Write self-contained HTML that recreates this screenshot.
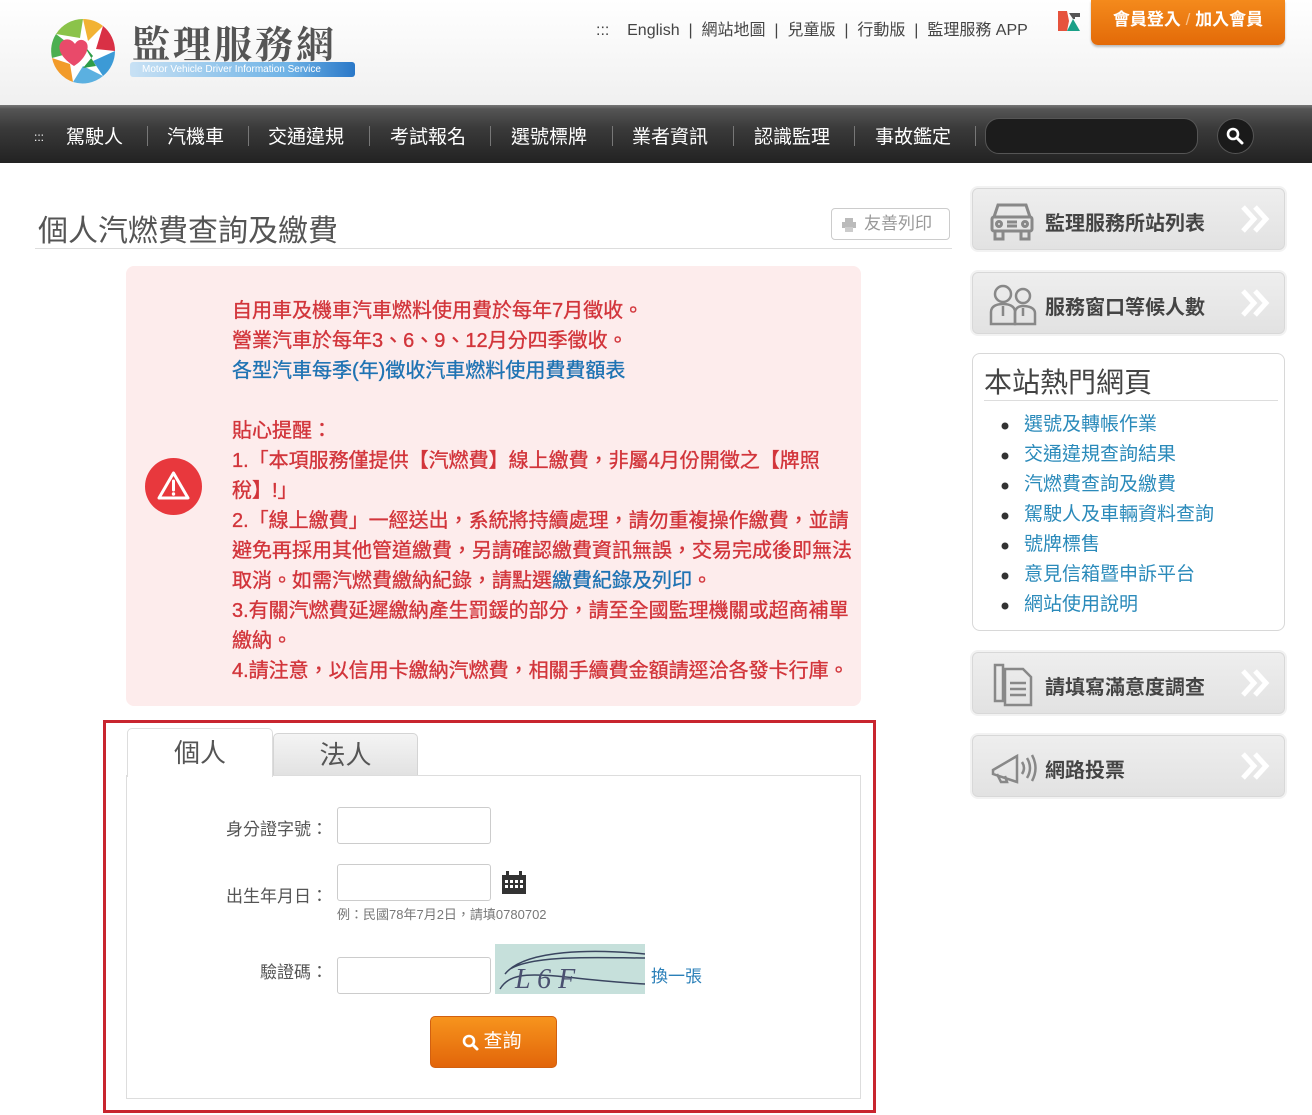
<!DOCTYPE html>
<html><head><meta charset="utf-8">
<style>
*{box-sizing:border-box;margin:0;padding:0}
body{width:1312px;height:1115px;position:relative;background:#fff;font-family:"Liberation Sans","Noto Sans CJK TC",sans-serif;overflow:hidden;color:#333}
.a{position:absolute;white-space:nowrap}
#hdr{position:absolute;left:0;top:0;width:1312px;height:105px;background:linear-gradient(#fff,#f0f0f0)}
#nav{position:absolute;left:0;top:105px;width:1312px;height:58px;background:linear-gradient(#777 0,#555 4px,#3a3a3a 40%,#222)}
.ni{position:absolute;top:122px;color:#fff;font-size:19px}
.sep{position:absolute;top:126px;width:1px;height:20px;background:#777}
.red{color:#d2353b}
.blue{color:#1f73b3}
.sb{position:absolute;left:972px;width:313px;height:62px;border:1px solid #d8d8d8;border-radius:6px;background:linear-gradient(#eee,#e2e2e2);box-shadow:0 0 0 2px #f2f2f2}
.sb .t{position:absolute;left:72px;top:18px;font-size:20px;font-weight:bold;color:#444}
.sb .ch{position:absolute;right:14px;top:16px}
.inp{position:absolute;left:337px;width:154px;height:37px;border:1px solid #ccc;border-radius:3px;background:#fff}
.lbl{position:absolute;font-size:17px;color:#555;text-align:right;width:150px;left:178px}
</style></head><body>
<div id="hdr"></div>
<svg class="a" style="left:48px;top:16px" width="70" height="70" viewBox="0 0 70 70">
<circle cx="35" cy="35" r="32" fill="#fff"/>
<path d="M35 3 A32 32 0 0 1 55 10 L40 25 Z" fill="#f2b233"/>
<path d="M55 10 A32 32 0 0 1 67 35 L48 33 Z" fill="#d93045"/>
<path d="M67 35 A32 32 0 0 1 55 60 L45 45 Z" fill="#3c9ad6"/>
<path d="M55 60 A32 32 0 0 1 25 66 L35 50 Z" fill="#5bb0e0"/>
<path d="M25 66 A32 32 0 0 1 4 42 L22 48 Z" fill="#f29b2a"/>
<path d="M4 42 A32 32 0 0 1 8 18 L30 35 Z" fill="#4caf50"/>
<path d="M8 18 A32 32 0 0 1 35 3 L32 22 Z" fill="#8bc34a"/>
<path d="M35 28 L45 40 L35 52 L48 50 Z" fill="#2e9d48"/>
<path d="M26 50 C10 40 8 28 16 24 C21 22 25 25 27 28 C29 24 34 22 38 26 C43 32 36 44 26 50 Z" fill="#e94a6a"/>
</svg>
<div class="a" style="left:132px;top:14px;font-size:38px;color:#555;font-family:'Noto Serif CJK SC',serif;font-weight:bold;letter-spacing:3px">監理服務網</div>
<div class="a" style="left:130px;top:62px;width:225px;height:15px;background:linear-gradient(90deg,#c8e1f4,#6fb3e6 70%,#2a78c8);border-radius:3px;color:#fff;font-size:10px;line-height:15px;padding-left:12px">Motor Vehicle Driver Information Service</div>
<div class="a" style="left:596px;top:16px;font-size:16px;color:#444">:::&nbsp;&nbsp;&nbsp;&nbsp;English &nbsp;|&nbsp; 網站地圖 &nbsp;|&nbsp; 兒童版 &nbsp;|&nbsp; 行動版 &nbsp;|&nbsp; 監理服務 APP</div>
<svg class="a" style="left:1058px;top:11px" width="22" height="20"><path d="M0 0H9L11 10L9 20H0Z" fill="#e6533d"/><path d="M11 2H22V6H17V8H15Z" fill="#555"/><path d="M15 8L22 20H9Z" fill="#1aa087"/></svg>
<div class="a" style="left:1091px;top:0;width:194px;height:45px;border-radius:0 0 7px 7px;background:linear-gradient(#f48a1c,#e36a08);color:#fff;font-size:17px;font-weight:bold;text-align:center;line-height:40px;box-shadow:0 2px 2px #bbb">會員登入 <span style="font-weight:normal;color:#f8c08a">/</span> 加入會員</div>

<div id="nav"></div>
<div class="ni" style="left:34px;font-size:12px;top:130px">:::</div>
<div class="ni" style="left:66px">駕駛人</div><div class="sep" style="left:147px"></div>
<div class="ni" style="left:167px">汽機車</div><div class="sep" style="left:248px"></div>
<div class="ni" style="left:268px">交通違規</div><div class="sep" style="left:369px"></div>
<div class="ni" style="left:390px">考試報名</div><div class="sep" style="left:490px"></div>
<div class="ni" style="left:511px">選號標牌</div><div class="sep" style="left:612px"></div>
<div class="ni" style="left:632px">業者資訊</div><div class="sep" style="left:733px"></div>
<div class="ni" style="left:754px">認識監理</div><div class="sep" style="left:854px"></div>
<div class="ni" style="left:875px">事故鑑定</div><div class="sep" style="left:975px"></div>
<div class="a" style="left:985px;top:118px;width:213px;height:36px;border-radius:14px;background:#1c1c1c;border:1px solid #555"></div>
<div class="a" style="left:1217px;top:118px;width:37px;height:36px;border-radius:50%;background:#1a1a1a;border:1px solid #555"></div>
<svg class="a" style="left:1226px;top:127px" width="18" height="18"><circle cx="7" cy="7" r="5" stroke="#fff" stroke-width="2.6" fill="none"/><path d="M11 11L16 16" stroke="#fff" stroke-width="3" stroke-linecap="round"/></svg>

<div class="a" style="left:38px;top:206px;font-size:30px;color:#555">個人汽燃費查詢及繳費</div>
<div class="a" style="left:35px;top:248px;width:917px;height:1px;background:#ddd"></div>
<div class="a" style="left:831px;top:208px;width:119px;height:32px;border:1px solid #ccc;border-radius:4px;color:#999;font-size:17px;line-height:30px;padding-left:32px">友善列印</div>
<svg class="a" style="left:842px;top:218px" width="14" height="14"><rect x="3" y="0" width="8" height="4" fill="#bbb"/><rect x="0" y="4" width="14" height="6" fill="#bbb"/><rect x="3" y="9" width="8" height="5" fill="#ccc"/></svg>

<div class="a" style="left:126px;top:266px;width:735px;height:440px;background:#fdecec;border-radius:8px"></div>
<svg class="a" style="left:145px;top:458px" width="57" height="57" viewBox="0 0 57 57"><circle cx="28.5" cy="28.5" r="28.5" fill="#e8383d"/><path d="M28.5 15L43 40H14Z" fill="none" stroke="#fff" stroke-width="3" stroke-linejoin="round"/><path d="M28.5 23V32" stroke="#fff" stroke-width="3" stroke-linecap="round"/><circle cx="28.5" cy="36" r="1.7" fill="#fff"/></svg>
<div class="a red" style="left:232px;top:296px;font-size:20px;line-height:30px;font-weight:normal;-webkit-text-stroke:0.35px #d2353b">
自用車及機車汽車燃料使用費於每年7月徵收。<br>
營業汽車於每年3、6、9、12月分四季徵收。<br>
<span class="blue" style="-webkit-text-stroke:0.35px #1f73b3">各型汽車每季(年)徵收汽車燃料使用費費額表</span><br>
<br>
貼心提醒：<br>
1.「本項服務僅提供【汽燃費】線上繳費，非屬4月份開徵之【牌照<br>
稅】!」<br>
2.「線上繳費」一經送出，系統將持續處理，請勿重複操作繳費，並請<br>
避免再採用其他管道繳費，另請確認繳費資訊無誤，交易完成後即無法<br>
取消。如需汽燃費繳納紀錄，請點選<span class="blue" style="-webkit-text-stroke:0.35px #1f73b3">繳費紀錄及列印</span>。<br>
3.有關汽燃費延遲繳納產生罰鍰的部分，請至全國監理機關或超商補單<br>
繳納。<br>
4.請注意，以信用卡繳納汽燃費，相關手續費金額請逕洽各發卡行庫。
</div>

<div class="a" style="left:103px;top:720px;width:773px;height:393px;border:3px solid #c8252f"></div>
<div class="a" style="left:126px;top:775px;width:735px;height:324px;border:1px solid #ddd;background:#fff"></div>
<div class="a" style="left:127px;top:728px;width:146px;height:49px;background:#fff;border:1px solid #ddd;border-bottom:none;border-radius:5px 5px 0 0;font-size:26px;color:#555;text-align:center;line-height:48px">個人</div>
<div class="a" style="left:273px;top:733px;width:145px;height:42px;background:linear-gradient(#f4f4f4,#e2e2e2);border:1px solid #d4d4d4;border-bottom:none;border-radius:5px 5px 0 0;font-size:26px;color:#555;text-align:center;line-height:42px">法人</div>
<div class="lbl" style="top:815px">身分證字號：</div>
<div class="inp" style="top:807px"></div>
<div class="lbl" style="top:882px">出生年月日：</div>
<div class="inp" style="top:864px"></div>
<svg class="a" style="left:502px;top:871px" width="24" height="23"><rect x="0" y="4" width="24" height="19" fill="#333"/><rect x="4" y="0" width="3" height="6" fill="#333"/><rect x="17" y="0" width="3" height="6" fill="#333"/><g fill="#fff"><rect x="3" y="9" width="3" height="3"/><rect x="8" y="9" width="3" height="3"/><rect x="13" y="9" width="3" height="3"/><rect x="18" y="9" width="3" height="3"/><rect x="3" y="14" width="3" height="3"/><rect x="8" y="14" width="3" height="3"/><rect x="13" y="14" width="3" height="3"/><rect x="18" y="14" width="3" height="3"/></g></svg>
<div class="a" style="left:337px;top:904px;font-size:13px;color:#777">例：民國78年7月2日，請填0780702</div>
<div class="lbl" style="top:958px">驗證碼：</div>
<div class="inp" style="top:957px"></div>
<svg class="a" style="left:495px;top:944px" width="150" height="50"><rect width="150" height="50" fill="#c6e0db"/><path d="M10 30C30 5 100 5 150 10M15 25C40 10 110 14 150 14M5 45C20 20 60 35 150 40" stroke="#3a4560" stroke-width="1.5" fill="none"/><text x="20" y="44" font-family="Liberation Serif" font-size="28" fill="#4a5070" font-style="italic">L 6 F</text></svg>
<div class="a blue" style="left:651px;top:962px;font-size:17px;color:#2a7fb8">換一張</div>
<div class="a" style="left:430px;top:1016px;width:127px;height:52px;border-radius:5px;background:linear-gradient(#f7941d,#e2650a);border:1px solid #d26010;color:#fff;font-size:19px;line-height:50px;text-align:center;padding-left:18px">查詢</div>
<svg class="a" style="left:462px;top:1034px" width="18" height="18"><circle cx="7" cy="7" r="5" stroke="#fff" stroke-width="2.6" fill="none"/><path d="M11 11L15 15" stroke="#fff" stroke-width="3" stroke-linecap="round"/></svg>

<div class="sb" style="top:188px"><div class="t">監理服務所站列表</div><svg class="ch" width="30" height="28"><path d="M3 2L14 14L3 26M15 2L26 14L15 26" stroke="#fff" stroke-width="5" fill="none"/></svg>
<svg class="a" style="left:16px;top:12px" width="46" height="40" fill="none" stroke="#888" stroke-width="3"><path d="M9 4H37L41 16H5Z"/><rect x="3" y="16" width="40" height="14" rx="2"/><rect x="6" y="30" width="8" height="8"/><rect x="32" y="30" width="8" height="8"/><circle cx="10" cy="23" r="2.5"/><circle cx="36" cy="23" r="2.5"/><path d="M18 21H28M18 25H28"/></svg></div>
<div class="sb" style="top:272px"><div class="t">服務窗口等候人數</div><svg class="ch" width="30" height="28"><path d="M3 2L14 14L3 26M15 2L26 14L15 26" stroke="#fff" stroke-width="5" fill="none"/></svg>
<svg class="a" style="left:16px;top:9px" width="48" height="44" fill="none" stroke="#888" stroke-width="2.5"><circle cx="14" cy="12" r="8"/><circle cx="34" cy="14" r="7"/><path d="M2 42V30C2 24 8 22 14 22C20 22 26 24 26 30V42Z"/><path d="M26 42V31C26 26 30 24 34 24C40 24 46 26 46 31V42Z"/><path d="M14 24V34M34 26V34"/></svg></div>
<div class="a" style="left:972px;top:353px;width:313px;height:278px;border:1px solid #d8d8d8;border-radius:8px;background:#fff"></div>
<div class="a" style="left:984px;top:361px;font-size:28px;color:#444">本站熱門網頁</div>
<div class="a" style="left:984px;top:400px;width:294px;height:1px;background:#ddd"></div>
<div class="a" style="left:1024px;top:410px;font-size:19px;line-height:30px;color:#2a8aba">
<div>選號及轉帳作業</div><div>交通違規查詢結果</div><div>汽燃費查詢及繳費</div><div>駕駛人及車輛資料查詢</div><div>號牌標售</div><div>意見信箱暨申訴平台</div><div>網站使用說明</div></div>
<svg class="a" style="left:1000px;top:410px" width="12" height="210" fill="#333"><circle cx="5" cy="16" r="3.5"/><circle cx="5" cy="46" r="3.5"/><circle cx="5" cy="76" r="3.5"/><circle cx="5" cy="106" r="3.5"/><circle cx="5" cy="136" r="3.5"/><circle cx="5" cy="166" r="3.5"/><circle cx="5" cy="196" r="3.5"/></svg>
<div class="sb" style="top:652px"><div class="t">請填寫滿意度調查</div><svg class="ch" width="30" height="28"><path d="M3 2L14 14L3 26M15 2L26 14L15 26" stroke="#fff" stroke-width="5" fill="none"/></svg>
<svg class="a" style="left:20px;top:10px" width="40" height="44" fill="none" stroke="#888" stroke-width="2.5"><rect x="2" y="2" width="8" height="36"/><path d="M12 6H30L38 14V42H12Z"/><path d="M17 20H33M17 26H33M17 32H33"/></svg></div>
<div class="sb" style="top:735px"><div class="t">網路投票</div><svg class="ch" width="30" height="28"><path d="M3 2L14 14L3 26M15 2L26 14L15 26" stroke="#fff" stroke-width="5" fill="none"/></svg>
<svg class="a" style="left:16px;top:14px" width="48" height="34" fill="none" stroke="#888" stroke-width="2.5"><path d="M4 20L28 6V32L4 24Z"/><path d="M8 24L12 32H18L16 26"/><path d="M33 12Q37 18 33 24M38 8Q44 18 38 28M43 5Q50 18 43 31"/></svg></div>
</body></html>
